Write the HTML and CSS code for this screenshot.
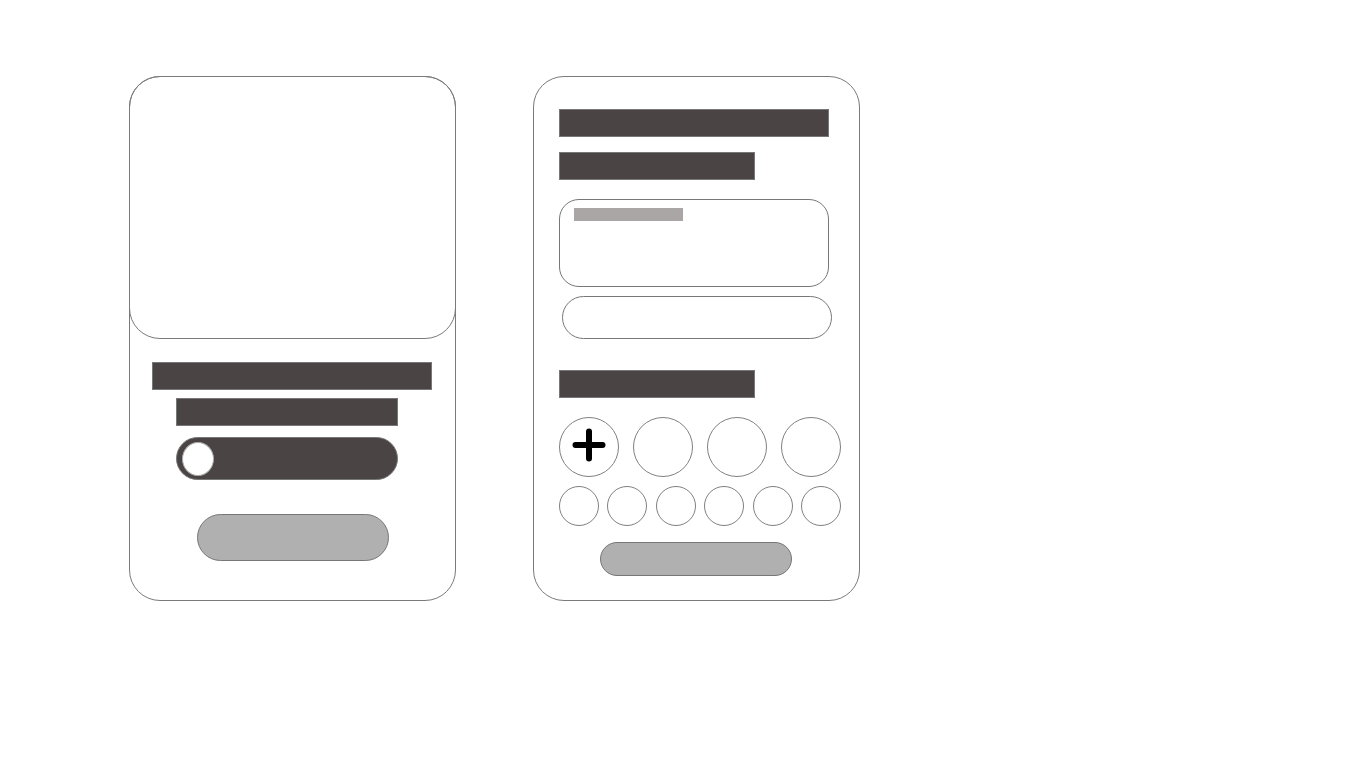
FILE: index.html
```html
<!DOCTYPE html>
<html lang="en">
<head>
    <meta charset="UTF-8">
    <meta name="viewport" content="width=device-width, initial-scale=1.0">
    <title>Wireframe</title>
    <link rel="stylesheet" href="styles.css">
</head>
<body>
    <div class="screens">
        <!-- Screen 1: Bild + Schalter -->
        <div class="card">
            <div class="media"></div>
            <div class="bar bar-title"></div>
            <div class="bar bar-sub"></div>
            <div class="toggle">
                <span class="knob"></span>
            </div>
            <div class="pill-button pill-tall"></div>
        </div>

        <!-- Screen 2: Formular -->
        <div class="card card-form">
            <div class="bar bar-wide"></div>
            <div class="bar bar-half gap-15"></div>
            <div class="textbox">
                <div class="placeholder"></div>
            </div>
            <div class="input-pill"></div>
            <div class="bar bar-half gap-31"></div>
            <div class="circles big">
                <div class="circle">
                    <svg class="plus" width="34" height="34" viewBox="0 0 34 34">
                        <path d="M17 3.5 V30.5 M3.5 17 H30.5" stroke="#000" stroke-width="6" stroke-linecap="round" fill="none"/>
                    </svg>
                </div>
                <div class="circle"></div>
                <div class="circle"></div>
                <div class="circle"></div>
            </div>
            <div class="circles small">
                <div class="circle"></div>
                <div class="circle"></div>
                <div class="circle"></div>
                <div class="circle"></div>
                <div class="circle"></div>
                <div class="circle"></div>
            </div>
            <div class="pill-button pill-short"></div>
        </div>
    </div>
</body>
</html>
```

FILE: styles.css
```css
* {
    box-sizing: border-box;
}

body {
    margin: 0;
    padding: 76px 0 0 129px;
    background-color: #fff;
    font-family: "Liberation Sans", Arial, sans-serif;
    min-height: 100vh;
}

.screens {
    display: flex;
    gap: 77px;
    align-items: flex-start;
}

.card {
    width: 327px;
    height: 525px;
    border: 1px solid #7a7a7a;
    border-radius: 31px;
    display: flex;
    flex-direction: column;
}

.media {
    height: 263px;
    margin: -1px -1px 0;
    border: 1px solid #7a7a7a;
    border-radius: 31px;
}

.bar {
    height: 28px;
    background-color: #4a4444;
    border: 1px solid #777;
}

.bar-title {
    width: 280px;
    margin: 23px 0 0 22px;
}

.bar-sub {
    width: 222px;
    margin: 8px 0 0 46px;
}

.toggle {
    width: 222px;
    height: 43px;
    margin: 11px 0 0 46px;
    background-color: #4a4444;
    border: 1px solid #777;
    border-radius: 22px;
    display: flex;
    align-items: center;
    padding-left: 5px;
}

.knob {
    width: 32px;
    height: 34px;
    border-radius: 50%;
    background-color: #fff;
    border: 1px solid #aaa;
}

.pill-button {
    width: 192px;
    background-color: #b0b0b0;
    border: 1px solid #777;
    border-radius: 24px;
}

.pill-tall {
    height: 47px;
    margin: 34px 0 0 67px;
}

/* zweiter Screen */
.card-form {
    padding: 32px 0 0 25px;
}

.bar-wide {
    width: 270px;
}

.bar-half {
    width: 196px;
}

.gap-15 {
    margin-top: 15px;
}

.gap-31 {
    margin-top: 31px;
}

.textbox {
    width: 270px;
    height: 88px;
    margin-top: 19px;
    border: 1px solid #777;
    border-radius: 20px;
    padding: 8px 0 0 14px;
}

.placeholder {
    width: 109px;
    height: 13px;
    background-color: #aaa6a5;
}

.input-pill {
    width: 270px;
    height: 43px;
    margin: 9px 0 0 3px;
    border: 1px solid #777;
    border-radius: 22px;
}

.circles {
    width: 282px;
    display: flex;
    justify-content: space-between;
}

.circles.big {
    margin-top: 19px;
}

.circles.small {
    margin-top: 9px;
}

.circle {
    border: 1px solid #808080;
    border-radius: 50%;
    display: flex;
    align-items: center;
    justify-content: center;
}

.plus {
    margin-bottom: 4px;
}

.big .circle {
    width: 60px;
    height: 60px;
}

.small .circle {
    width: 40px;
    height: 40px;
}

.pill-short {
    height: 34px;
    margin: 16px 0 0 41px;
    border-radius: 17px;
}
```
